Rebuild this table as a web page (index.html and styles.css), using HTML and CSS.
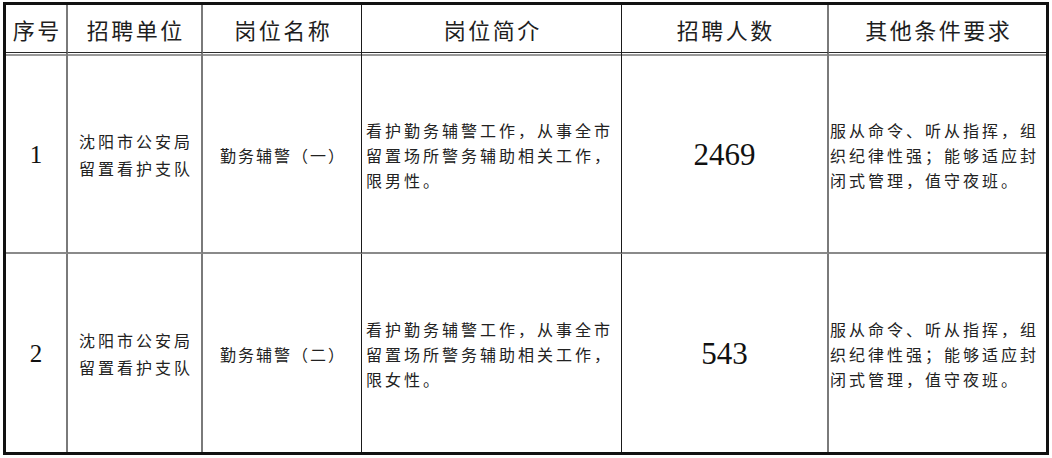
FILE: index.html
```html
<!DOCTYPE html>
<html lang="zh-CN">
<head>
<meta charset="utf-8">
<title>招聘岗位表</title>
<link rel="stylesheet" href="styles.css">
</head>
<body>
<div class="page">
  <div class="sheet">
    <div class="cell head c1">序号</div>
    <div class="cell head c2">招聘单位</div>
    <div class="cell head c3">岗位名称</div>
    <div class="cell head c4">岗位简介</div>
    <div class="cell head c5">招聘人数</div>
    <div class="cell head c6">其他条件要求</div>

    <div class="cell first c1 num">1</div>
    <div class="cell first c2 txt center two">沈阳市公安局<br>留置看护支队</div>
    <div class="cell first c3 txt center">勤务辅警（一）</div>
    <div class="cell first c4 txt left">看护勤务辅警工作，从事全市<br>留置场所警务辅助相关工作，<br>限男性。</div>
    <div class="cell first c5 big">2469</div>
    <div class="cell first c6 txt left tight">服从命令、听从指挥，组<br>织纪律性强；能够适应封<br>闭式管理，值守夜班。</div>

    <div class="cell last c1 num">2</div>
    <div class="cell last c2 txt center two">沈阳市公安局<br>留置看护支队</div>
    <div class="cell last c3 txt center">勤务辅警（二）</div>
    <div class="cell last c4 txt left">看护勤务辅警工作，从事全市<br>留置场所警务辅助相关工作，<br>限女性。</div>
    <div class="cell last c5 big">543</div>
    <div class="cell last c6 txt left tight">服从命令、听从指挥，组<br>织纪律性强；能够适应封<br>闭式管理，值守夜班。</div>
  </div>
</div>
</body>
</html>
```

FILE: styles.css
```css
html, body {
  margin: 0;
  padding: 0;
  background: #ffffff;
}

.page {
  width: 1052px;
  height: 458px;
  box-sizing: border-box;
  padding: 2px 3px 0 3px;
  background: #ffffff;
}

.sheet {
  width: 1046px;
  box-sizing: border-box;
  border: 3px solid #111111;
  display: grid;
  grid-template-columns: 62px 135px 159px 260px 207px 217px;
  grid-template-rows: 48px 201px 198px;
  font-family: "Noto Sans CJK SC", "Noto Sans", sans-serif;
  color: #222222;
}

.cell {
  box-sizing: border-box;
  display: flex;
  align-items: center;
  justify-content: center;
  white-space: nowrap;
}

.c1, .c2, .c5 { border-right: 2px solid #7a7a7a; }
.c3, .c4 { border-right: 1px solid #1a1a1a; }

.head {
  border-bottom: 1px solid #2a2a2a;
  font-size: 22px;
  letter-spacing: 2.5px;
  color: #1e1e1e;
  padding-left: 2.5px;
  padding-top: 1px;
}

.first {
  border-bottom: 2px solid #8a8a8a;
  background-image: linear-gradient(to bottom, #ffffff 0 1px, #9a9a9a 1px 3px, #ffffff 3px 100%);
  padding-top: 5px;
}

.last {
  padding-top: 2px;
}

.txt {
  font-size: 16px;
  letter-spacing: 3px;
  line-height: 25px;
}

.txt.two {
  line-height: 27px;
  padding-left: 3px;
}

.txt.center {
  text-align: center;
  padding-left: 3px;
}

.c3.txt {
  letter-spacing: 2px;
  padding-left: 2px;
}

.txt.left {
  justify-content: flex-start;
  text-align: left;
  padding-left: 4px;
}

.txt.tight {
  padding-left: 1px;
}

.num {
  font-family: "Liberation Serif", "Times New Roman", serif;
  font-size: 25px;
  color: #111111;
}

.big {
  font-family: "Liberation Serif", "Times New Roman", serif;
  font-size: 31px;
  color: #111111;
}
```
